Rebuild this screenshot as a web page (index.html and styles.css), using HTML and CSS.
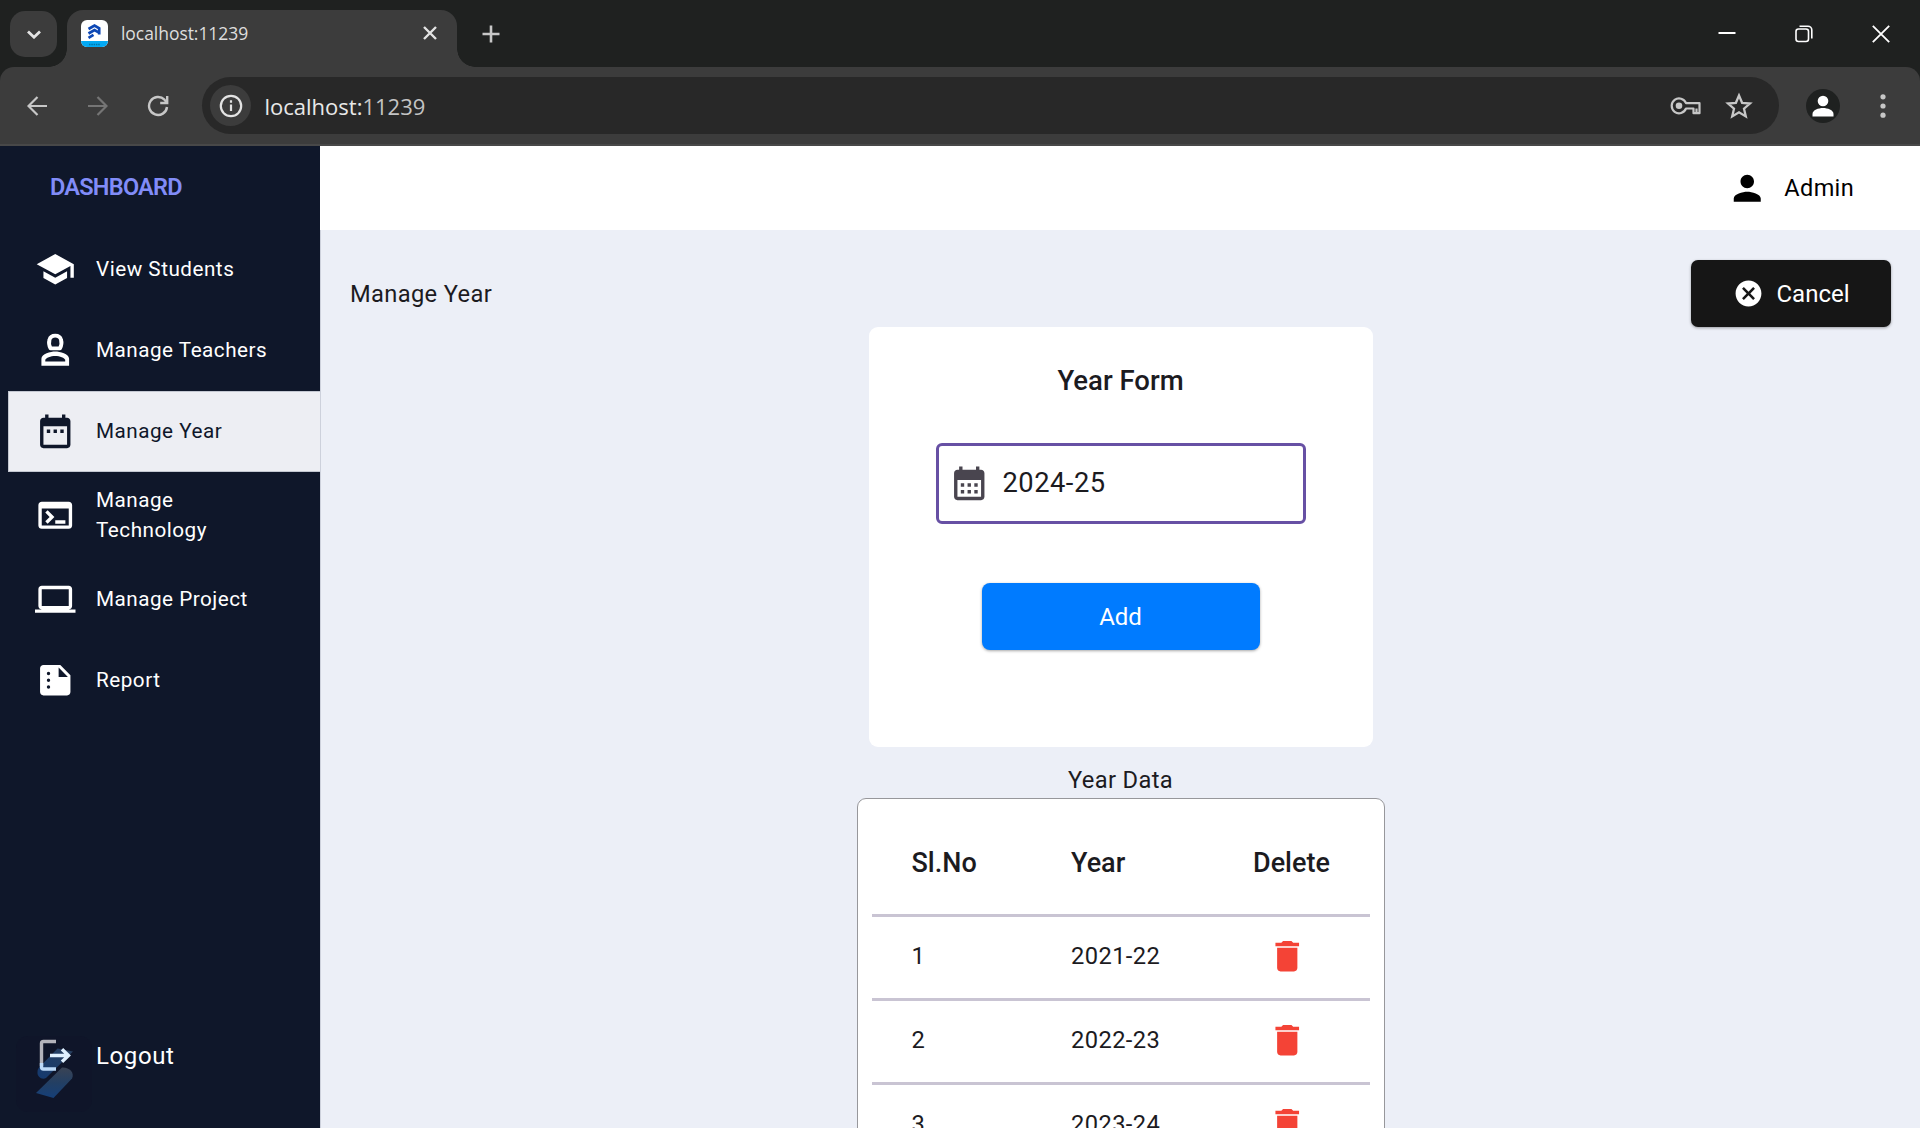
FILE: index.html
```html
<!DOCTYPE html>
<html lang="en">
<head>
<meta charset="utf-8">
<title>Manage Year</title>
<link rel="stylesheet" href="styles.css">
</head>
<body>
<div class="window">
  <div class="tabstrip">
    <div class="tab-search"><svg width="14" height="9" viewBox="0 0 14 9"><path d="M1 1.500 7 7.200l6-5.700" fill="none" stroke="#e3e3e3" stroke-width="2.800"/></svg></div>
    <div class="tab">
      <svg class="favicon" width="27" height="27" viewBox="0 0 27 27">
        <clipPath id="fav"><rect width="27" height="27" rx="6"/></clipPath>
        <g clip-path="url(#fav)"><rect width="27" height="27" fill="#fff"/><rect y="21" width="27" height="6" fill="#03a9f4"/></g>
        <path d="M7.500 9 13.500 5.500l4.700 2.800v6.200M7.500 13.500l6-3.500 4 2.300M7.500 17.800l5-3" fill="none" stroke="#0d47b5" stroke-width="2.700"/>
        <path d="M8 24.500h11.500" stroke="#0277a8" stroke-width="1.500" stroke-dasharray="1.500 .8"/>
      </svg>
      <span class="tab-title">localhost:11239</span>
      <svg width="14" height="14" viewBox="0 0 14 14"><path d="M1 1l12 12M13 1 1 13" stroke="#e3e3e3" stroke-width="2.400"/></svg>
    </div>
    <svg class="new-tab" width="18" height="18" viewBox="0 0 18 18"><path d="M9 .5v17M.5 9h17" stroke="#c7c7c7" stroke-width="2.600"/></svg>
    <div class="window-controls">
      <svg width="18" height="18" viewBox="0 0 18 18"><path d="M.5 8h17" stroke="#fff" stroke-width="2"/></svg>
      <svg width="18" height="18" viewBox="0 0 18 18" fill="none" stroke="#fff" stroke-width="1.600"><rect x="1" y="4" width="12.500" height="12.500" rx="2.500"/><path d="M4.500 1.200h8.500a3.800 3.800 0 0 1 3.800 3.800v8.500"/></svg>
      <svg width="18" height="18" viewBox="0 0 18 18"><path d="M.8.8l16.400 16.400M17.200.8.8 17.200" stroke="#fff" stroke-width="1.800"/></svg>
    </div>
  </div>
  <div class="toolbar">
    <svg width="20" height="20" viewBox="0 0 20 20" fill="none" stroke="#c7c7c7" stroke-width="2.200"><path d="M20 10H1.600M10.500 1 1.500 10l9 9"/></svg>
    <svg width="20" height="20" viewBox="0 0 20 20" fill="none" stroke="#757575" stroke-width="2.200"><path d="M0 10h18.400M9.500 1l9 9-9 9"/></svg>
    <svg width="22" height="22" viewBox="0 0 22 22" fill="none" stroke="#c7c7c7" stroke-width="2.400"><path d="M20 12a9 9 0 1 1-2.500-7.300L20 7.500M20.200 1v7h-7"/></svg>
    <div class="address">
      <div class="site-info"><svg width="24" height="24" viewBox="0 0 24 24"><circle cx="12" cy="12" r="10.200" fill="none" stroke="#e3e3e3" stroke-width="2.200"/><path d="M12 10.500v6.500M12 6.200v2.500" stroke="#e3e3e3" stroke-width="2.200"/></svg></div>
      <span class="url">localhost:<span class="port">11239</span></span>
      <svg class="key" width="31" height="18" viewBox="0 0 31 18" fill="none" stroke="#c7c7c7" stroke-width="2.200"><path d="M16 6.200h13.500v10h-6V11.500H16a7.400 7.400 0 1 1 0-5.300zM26.500 16v-4.500" stroke-linejoin="round"/><circle cx="9" cy="8.700" r="3.300" fill="#c7c7c7" stroke="none"/></svg>
      <svg width="28" height="28" viewBox="0 0 28 28"><path d="M14 3.500l3.100 7.300 7.900.7-6 5.200 1.800 7.700-6.800-4.100-6.800 4.100L9 16.700l-6-5.200 7.900-.7z" fill="none" stroke="#c7c7c7" stroke-width="2.300"/></svg>
    </div>
    <svg class="profile" width="34" height="34" viewBox="0 0 34 34"><circle cx="17" cy="17" r="17" fill="#1f2120"/><circle cx="17" cy="12" r="5.300" fill="#fff"/><path d="M6.500 27.500v-2.500c0-4 6-6 10.500-6s10.500 2 10.500 6v2.500z" fill="#fff"/></svg>
    <svg width="6" height="24" viewBox="0 0 6 24" fill="#c7c7c7"><circle cx="3" cy="2.800" r="2.600"/><circle cx="3" cy="12" r="2.600"/><circle cx="3" cy="21.200" r="2.600"/></svg>
  </div>

  <div class="app">
    <nav class="sidebar">
      <div class="brand">DASHBOARD</div>
      <div class="nav-item"><svg class="icon" viewBox="0 0 24 24"><path d="M5 13.180v4L12 21l7-3.820v-4L12 17l-7-3.820zM12 3L1 9l11 6 9-4.910V17h2V9L12 3z"/></svg><span>View Students</span></div>
      <div class="nav-item"><svg class="icon" viewBox="0 0 24 24"><path d="M9.200 10.900h5.600c1-1.900 1-3.900.6-5.200C15 4.100 13.600 3.300 12 3.300S9 4.100 8.600 5.700c-.4 1.300-.4 3.300.6 5.200z" fill="none" stroke="currentColor" stroke-width="2.300" stroke-linejoin="round"/><path fill-rule="evenodd" d="M12 12.800c-2.700 0-8.200 1.300-8.200 4.300v4.100h16.400v-4.100c0-3-5.500-4.300-8.200-4.300zM17.900 18.600H6.100v-.9c.3-1.200 3.200-2.300 5.900-2.300s5.600 1.100 5.900 2.300z"/></svg><span>Manage Teachers</span></div>
      <div class="nav-item active"><svg class="icon" viewBox="0 0 24 24"><path d="M9 11H7v2h2v-2zm4 0h-2v2h2v-2zm4 0h-2v2h2v-2zm2-7h-1V2h-2v2H8V2H6v2H5c-1.110 0-1.990.9-1.990 2L3 20c0 1.100.89 2 2 2h14c1.100 0 2-.9 2-2V6c0-1.100-.9-2-2-2zm0 16H5V9h14v11z"/></svg><span>Manage Year</span></div>
      <div class="nav-item tall"><svg class="icon" viewBox="0 0 24 24"><path d="M20 4H4c-1.110 0-2 .9-2 2v12c0 1.100.89 2 2 2h16c1.100 0 2-.9 2-2V6c0-1.100-.89-2-2-2zm0 14H4V8h16v10zm-2-1h-6v-2h6v2zM7.500 17l-1.410-1.410L8.670 13l-2.590-2.590L7.500 9l4 4-4 4z"/></svg><span>Manage<br>Technology</span></div>
      <div class="nav-item"><svg class="icon" viewBox="0 0 24 24"><path d="M20 18c1.100 0 1.990-.9 1.990-2L22 6c0-1.100-.9-2-2-2H4c-1.100 0-2 .9-2 2v10c0 1.100.9 2 2 2H0v2h24v-2h-4zM4 6h16v10H4V6z"/></svg><span>Manage Project</span></div>
      <div class="nav-item"><svg class="icon" viewBox="0 0 24 24"><path fill-rule="evenodd" d="M15 3H5c-1.100 0-2 .9-2 2v14c0 1.100.9 2 2 2h14c1.100 0 2-.9 2-2V9l-6-6zM8 17a1 1 0 1 1 0-2 1 1 0 0 1 0 2zm0-4a1 1 0 1 1 0-2 1 1 0 0 1 0 2zm0-4a1 1 0 1 1 0-2 1 1 0 0 1 0 2zm6 1V4.500l5.500 5.500H14z"/></svg><span>Report</span></div>
      <div class="logout">
        <svg width="76" height="76" viewBox="0 0 76 76">
          <defs>
            <linearGradient id="s1" x1="1" y1="0" x2="0" y2="1"><stop offset="0" stop-color="#29405f"/><stop offset="1" stop-color="#14396f"/></linearGradient>
            <linearGradient id="s2" x1=".5" y1="0" x2=".5" y2="1"><stop offset="0" stop-color="#3a4354"/><stop offset=".5" stop-color="#233f63"/><stop offset="1" stop-color="#153f78"/></linearGradient>
          </defs>
          <rect width="76" height="76" rx="12" fill="#0f1529"/>
          <path d="M41.500 12.500 57 15.500 30 42c-4 2-9-1-8.500-6 0-3 1-4 3-6z" fill="url(#s1)"/>
          <path d="M46 31.500c7-.5 13 5 10 11L37.500 62l-17.500-5z" fill="url(#s2)"/>
          <path d="M40 5.500H27.500q-2 0-2 2V30" fill="none" stroke="#b3b3bb" stroke-width="3.400"/>
          <path d="M25.500 27v4q0 2 2 2H40" fill="none" stroke="#bcd9f8" stroke-width="3.400"/>
          <path d="M34 19.500h18.500M46 13.200l6.500 6.300-6.500 6.300" fill="none" stroke="#dff0ff" stroke-width="3.400"/>
        </svg>
        <span>Logout</span>
      </div>
    </nav>

    <main class="main">
      <header class="topbar">
        <svg class="icon" viewBox="0 0 24 24"><path d="M12 12c2.210 0 4-1.790 4-4s-1.790-4-4-4-4 1.790-4 4 1.790 4 4 4zm0 2c-2.670 0-8 1.340-8 4v2h16v-2c0-2.660-5.330-4-8-4z"/></svg>
        <span>Admin</span>
      </header>
      <section class="content">
        <div class="page-head">
          <h1>Manage Year</h1>
          <button class="cancel"><svg width="31" height="31" viewBox="0 0 24 24" fill="#fff"><path d="M12 2C6.470 2 2 6.470 2 12s4.470 10 10 10 10-4.470 10-10S17.530 2 12 2zm5 13.590L15.590 17 12 13.410 8.410 17 7 15.590 10.590 12 7 8.410 8.410 7 12 10.590 15.590 7 17 8.410 13.410 12 17 15.590z"/></svg><span>Cancel</span></button>
        </div>
        <div class="form-card">
          <h2>Year Form</h2>
          <div class="field"><svg class="icon" viewBox="0 0 24 24"><path d="M19 4h-1V2h-2v2H8V2H6v2H5c-1.110 0-2 .9-2 2v14c0 1.100.9 2 2 2h14c1.100 0 2-.9 2-2V6c0-1.100-.9-2-2-2zm0 16H5V10h14v10zM9 14H7v-2h2v2zm4 0h-2v-2h2v2zm4 0h-2v-2h2v2zm-8 4H7v-2h2v2zm4 0h-2v-2h2v2zm4 0h-2v-2h2v2z"/></svg><span>2024-25</span></div>
          <button class="add">Add</button>
        </div>
        <div class="table-title">Year Data</div>
        <div class="table-card">
          <div class="row head"><span>Sl.No</span><span>Year</span><span>Delete</span></div>
          <div class="row"><span>1</span><span>2021-22</span><svg class="icon trash" viewBox="0 0 24 24"><path d="M6 19c0 1.100.9 2 2 2h8c1.100 0 2-.9 2-2V7H6v12zM19 4h-3.500l-1-1h-5l-1 1H5v2h14V4z"/></svg></div>
          <div class="row"><span>2</span><span>2022-23</span><svg class="icon trash" viewBox="0 0 24 24"><path d="M6 19c0 1.100.9 2 2 2h8c1.100 0 2-.9 2-2V7H6v12zM19 4h-3.500l-1-1h-5l-1 1H5v2h14V4z"/></svg></div>
          <div class="row"><span>3</span><span>2023-24</span><svg class="icon trash" viewBox="0 0 24 24"><path d="M6 19c0 1.100.9 2 2 2h8c1.100 0 2-.9 2-2V7H6v12zM19 4h-3.500l-1-1h-5l-1 1H5v2h14V4z"/></svg></div>
        </div>
      </section>
    </main>
  </div>
</div>
</body>
</html>
```
FILE: styles.css
```css
* { box-sizing: border-box; }
body { margin: 0; font-family: Roboto, sans-serif; }
h1, h2 { margin: 0; font-weight: 400; }
button { border: 0; padding: 0; font: inherit; color: inherit; }
svg { display: block; flex: none; }
.window { width: 1920px; height: 1128px; overflow: hidden; display: flex; flex-direction: column; background: #1f2120; }

.tabstrip { height: 67px; flex: none; display: flex; align-items: flex-start; padding: 10px 30px 0 10px; background: #1f2120; }
.tab-search { width: 47px; height: 46px; margin-top: 1px; border-radius: 15px; background: #3c3c3c; display: flex; align-items: center; justify-content: center; }
.tab { position: relative; width: 390px; height: 57px; margin-left: 10px; padding: 0 20px 11px 14px; border-radius: 16px 16px 0 0; background: #3c3c3c; display: flex; align-items: center; }
.tab::before, .tab::after { content: ""; position: absolute; bottom: 0; width: 18px; height: 18px; }
.tab::before { left: -18px; background: radial-gradient(circle at 0 0, transparent 17.5px, #3c3c3c 18px); }
.tab::after { right: -18px; background: radial-gradient(circle at 100% 0, transparent 17.5px, #3c3c3c 18px); }
.tab-title { flex: 1; margin-left: 13px; font: 17.5px/24px "Open Sans", sans-serif; color: #dedede; letter-spacing: -.05px; }
.new-tab { margin: 15px 0 0 24.5px; }
.window-controls { margin: 15px 0 0 auto; display: flex; gap: 59px; }

.toolbar { height: 79px; flex: none; display: flex; align-items: center; padding: 0 33px 0 27px; background: #3c3c3c; border-bottom: 2px solid #484848; border-radius: 14px 14px 0 0; }
.toolbar > svg + svg { margin-left: 41px; }
.toolbar > svg:nth-child(3) { margin-left: 39px; }
.address { width: 1577px; height: 57px; margin-left: 33px; padding: 0 26px 0 8px; border-radius: 29px; background: #282828; display: flex; align-items: center; }
.site-info { width: 41px; height: 41px; border-radius: 50%; background: #3c3c3c; display: flex; align-items: center; justify-content: center; }
.url { flex: 1; margin-left: 13.5px; font: 22px/30px "Open Sans", sans-serif; color: #e8e8e8; }
.port { color: #c4c4c4; }
.key { margin-right: 24px; }
.profile { margin-left: 27px; }
.toolbar > .profile + svg { margin-left: 40px; }

.app { flex: 1; min-height: 0; display: flex; }
.icon { width: 40.5px; height: 40.5px; fill: currentColor; }
.sidebar { width: 320px; flex: none; display: flex; flex-direction: column; background: #0f172a; color: #fff; }
.brand { height: 83px; padding-left: 50px; line-height: 83px; font-size: 23.5px; font-weight: 600; letter-spacing: -.75px; color: #818cf8; }
.nav-item { height: 81px; margin-left: 8px; padding-left: 27px; display: flex; align-items: center; gap: 20.5px; font-size: 20.7px; font-weight: 450; line-height: 30px; letter-spacing: .5px; }
.nav-item span { padding-bottom: 2px; }
.nav-item.active { background: #edeef3; border: 1px solid #c3c7d1; border-right: 0; padding-left: 26px; color: #0f172a; font-weight: 400; }
.nav-item.tall { height: 87px; }
.logout { margin: auto 0 16px 16px; height: 76px; display: flex; gap: 4px; }
.logout span { margin-top: 6px; line-height: 28px; font-size: 24px; letter-spacing: .6px; }

.main { flex: 1; min-width: 0; display: flex; flex-direction: column; }
.topbar { height: 84px; flex: none; padding-right: 66px; display: flex; align-items: center; justify-content: flex-end; gap: 17px; background: #fff; color: #000; font-size: 23.5px; letter-spacing: .35px; }
.topbar span { padding-bottom: 1px; }
.content { flex: 1; min-height: 0; padding: 30px 30px 0 30px; background: #eceff7; border-left: 1px solid #cdd1dc; color: #1c1b1f; display: flex; flex-direction: column; align-items: center; }
.page-head { align-self: stretch; height: 67px; flex: none; display: flex; justify-content: space-between; align-items: center; }
h1 { padding-top: 1px; font-size: 23.7px; letter-spacing: .35px; margin-left: -1px; }
.cancel { width: 200px; height: 67px; margin-right: -1px; border-radius: 7px; background: #161616; color: #fff; font-size: 24px; font-weight: 450; display: flex; align-items: center; padding-left: 41.5px; gap: 13px; box-shadow: 0 1px 3px rgba(0,0,0,.35); }
.form-card { width: 504px; height: 420px; flex: none; padding: 37px 0 0; border-radius: 9px; background: #fff; display: flex; flex-direction: column; align-items: center; }
h2 { font-size: 27.5px; line-height: 34px; font-weight: 550; }
.field { width: 370px; height: 81px; margin-top: 45px; padding-left: 10.5px; border: 3px solid #6750a4; border-radius: 6px; display: flex; align-items: center; gap: 13px; font-size: 27.3px; letter-spacing: .5px; }
.field span { padding-bottom: 2px; }
.field .icon { color: #49454f; }
.add { width: 278px; height: 67px; margin-top: 59px; border-radius: 8px; background: #007bff; color: #fff; font-size: 24px; font-weight: 450; box-shadow: 0 1px 3px rgba(0,0,0,.35); }
.table-title { height: 51px; flex: none; padding-top: 16px; line-height: 34px; font-size: 23.7px; letter-spacing: .35px; }
.table-card { width: 528px; height: 500px; flex: none; padding: 0 14px; border: 1px solid #97979b; border-radius: 9px; background: #fff; }
.row { height: 84px; padding: 0 0 2px 40px; display: grid; grid-template-columns: 159.5px 182px 1fr; align-items: center; font-size: 23.7px; letter-spacing: .4px; border-bottom: 3px solid #c9c4d3; }
.row > span { padding-bottom: 2px; }
.row.head { height: 118px; padding-top: 14px; padding-bottom: 0; font-size: 27px; font-weight: 550; letter-spacing: 0; }
.trash { margin-left: 14px; color: #f44336; }
```
